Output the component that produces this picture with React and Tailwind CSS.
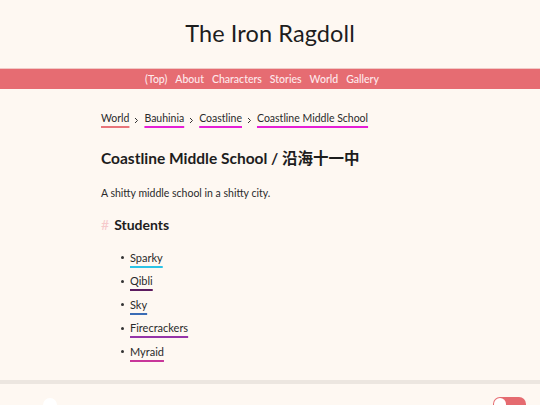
import React from "react";

const crumbs = [
  { label: "World", line: "decoration-[#e8757a]" },
  { label: "Bauhinia", line: "decoration-[#e51fd6]" },
  { label: "Coastline", line: "decoration-[#e51fd6]" },
  { label: "Coastline Middle School", line: "decoration-[#e51fd6]" },
];

const students = [
  { name: "Sparky", line: "decoration-[#2cc3e6]" },
  { name: "Qibli", line: "decoration-[#5c1c5f]" },
  { name: "Sky", line: "decoration-[#3a6cb5]" },
  { name: "Firecrackers", line: "decoration-[#9534a8]" },
  { name: "Myraid", line: "decoration-[#c8369a]" },
];

const nav = ["(Top)", "About", "Characters", "Stories", "World", "Gallery"];

function Chevron() {
  return (
    <svg width="7" height="7" viewBox="0 0 7 7" className="mx-[4px] mt-[4px] shrink-0">
      <path d="M2 1 L4.5 3.5 L2 6" fill="none" stroke="#333" strokeWidth="1" />
    </svg>
  );
}

export default function App() {
  return (
    <div
      className="h-[405px] overflow-hidden bg-[#fef8f2] text-[#222]"
      style={{ fontFamily: "Lato, 'Noto Sans CJK SC', sans-serif" }}
    >
      <header className="flex h-[68px] items-center justify-center">
        <h1 className="text-[23.5px] leading-none tracking-[0.1px] text-[#1d1d1d]">The Iron Ragdoll</h1>
      </header>

      <nav className="flex h-[21px] items-center justify-center gap-[8px] border-t border-[#f1c9c6] bg-[#e66c72] pr-[16px] pt-[2px] text-[10.5px] font-medium text-[#feeaec]">
        {nav.map((n) => (
          <span key={n}>{n}</span>
        ))}
      </nav>

      <main className="mx-auto w-[338px] pt-[22px]">
        <div className="flex items-center text-[10.5px] text-[#2a2a2a]">
          {crumbs.map((c, i) => (
            <React.Fragment key={c.label}>
              {i > 0 && <Chevron />}
              <span className={`underline decoration-2 underline-offset-[4px] ${c.line}`}>{c.label}</span>
            </React.Fragment>
          ))}
        </div>

        <h2 className="mt-[21px] text-[15.5px] font-bold leading-[20px] text-[#1d1d1d]">
          Coastline Middle School / 沿海十一中
        </h2>

        <p className="mt-[17px] text-[10.5px] leading-[16px] text-[#2a2a2a]">
          A shitty middle school in a shitty city.
        </p>

        <h3 className="mt-[14px] flex items-center text-[14px] font-bold leading-[20px] text-[#1d1d1d]">
          <span className="mr-[5px] font-normal text-[#f6c9cb]">#</span>Students
        </h3>

        <ul className="mt-[15px] flex flex-col gap-[7.5px] pl-[20px] text-[11px] leading-[16px] text-[#2a2a2a]">
          {students.map((s) => (
            <li key={s.name} className="flex items-center">
              <span className="mr-[6px] inline-block h-[3px] w-[3px] rounded-full bg-[#333]" />
              <span className={`underline decoration-2 underline-offset-[4px] ${s.line}`}>{s.name}</span>
            </li>
          ))}
        </ul>
      </main>

      <footer className="mt-[20px] border-t-[4px] border-[#ece6e0] pt-[13px]">
        <div className="flex items-start justify-between pl-[43px] pr-[14px]">
          <div className="mt-[1px] h-[14px] w-[14px] rounded-full bg-white" />
          <div className="flex h-[14px] w-[33px] items-start rounded-full bg-[#e56b70] pl-[1px] pt-[1px]">
            <div className="h-[12px] w-[12px] rounded-full bg-white" />
          </div>
        </div>
      </footer>
    </div>
  );
}
